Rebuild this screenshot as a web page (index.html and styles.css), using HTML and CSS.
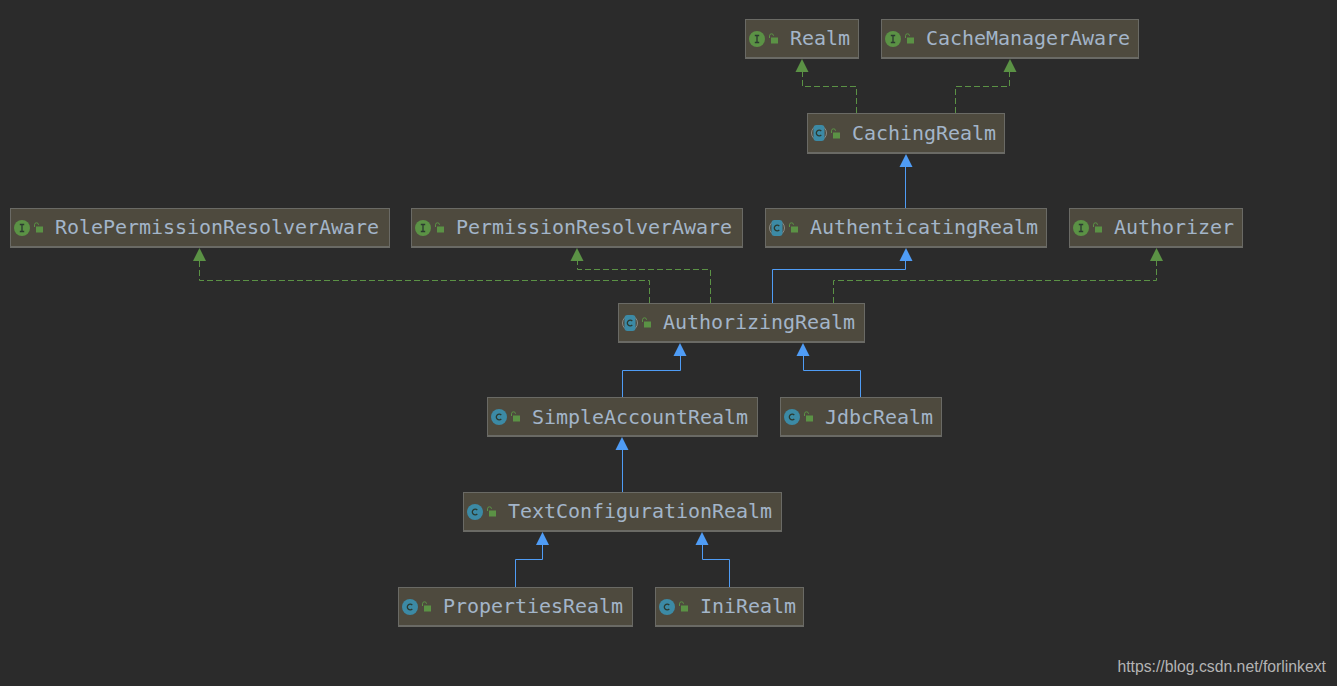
FILE: index.html
```
<!DOCTYPE html>
<html lang="en">
<head>
<meta charset="utf-8">
<title>Realm class diagram</title>
<link rel="stylesheet" href="styles.css">
</head>
<body>
<main class="canvas">
<svg class="edges" width="1337" height="686" viewBox="0 0 1337 686" aria-hidden="true">
  <g class="dash">
    <path d="M856.5 113V86.5H802.500V70"/>
    <path d="M955.5 113V86.5H1009.500V70"/>
    <path d="M649.5 303V280.5H199.500V260"/>
    <path d="M710.5 303V269.5H577.500V260"/>
    <path d="M833.5 303V280.5H1156.500V260"/>
  </g>
  <g class="solid">
    <path d="M905.5 208V165"/>
    <path d="M772.5 303V269.5H905.500V260"/>
    <path d="M622.5 397V370.5H680.500V354"/>
    <path d="M860.5 397V370.5H803.500V354"/>
    <path d="M622.5 492V449"/>
    <path d="M515.5 587V559.5H542.500V544"/>
    <path d="M729.5 587V559.5H702.500V544"/>
  </g>
  <g class="head-green">
    <path d="M802 59l6.5 13h-13z"/>
    <path d="M1010 59l6.5 13h-13z"/>
    <path d="M199.500 248l6.500 13h-13z"/>
    <path d="M577 248l6.500 13h-13z"/>
    <path d="M1156.500 248l6.500 13h-13z"/>
  </g>
  <g class="head-blue">
    <path d="M906 154l6.500 13h-13z"/>
    <path d="M906 248l6.500 13h-13z"/>
    <path d="M680 343l6.500 13h-13z"/>
    <path d="M803 343l6.500 13h-13z"/>
    <path d="M622 437l6.500 13h-13z"/>
    <path d="M542.500 532l6.500 13h-13z"/>
    <path d="M702 532l6.500 13h-13z"/>
  </g>
  <defs>
    <g id="lock">
      <path class="shackle" d="M1.500 5V2.800a2 2 0 0 1 4 0"/>
      <rect class="lockbody" x="3" y="4.500" width="7" height="6"/>
    </g>
    <g id="iface">
      <circle class="iface-disc" cx="8" cy="8" r="8"/>
      <path class="glyph" d="M5.800 4.500h4.400M5.800 11.500h4.400M8 4.500v7"/>
    </g>
    <g id="cls">
      <circle class="cls-disc" cx="8" cy="8" r="8"/>
      <path class="glyph" d="M10.300 6a2.900 2.900 0 1 0 0 4"/>
    </g>
    <g id="abs">
      <circle class="abs-ring" cx="8" cy="8" r="7.500"/>
      <rect class="cls-disc" x="2.500" y="0" width="11" height="16" rx="3"/>
      <path class="glyph" d="M10.300 6a2.900 2.900 0 1 0 0 4"/>
    </g>
  </defs>
</svg>

<div class="node n-realm"><svg class="kind"><use href="#iface"/></svg><svg class="lock"><use href="#lock"/></svg><span>Realm</span></div>
<div class="node n-cache"><svg class="kind"><use href="#iface"/></svg><svg class="lock"><use href="#lock"/></svg><span>CacheManagerAware</span></div>
<div class="node n-caching"><svg class="kind"><use href="#abs"/></svg><svg class="lock"><use href="#lock"/></svg><span>CachingRealm</span></div>
<div class="node n-role"><svg class="kind"><use href="#iface"/></svg><svg class="lock"><use href="#lock"/></svg><span>RolePermissionResolverAware</span></div>
<div class="node n-perm"><svg class="kind"><use href="#iface"/></svg><svg class="lock"><use href="#lock"/></svg><span>PermissionResolverAware</span></div>
<div class="node n-authn"><svg class="kind"><use href="#abs"/></svg><svg class="lock"><use href="#lock"/></svg><span>AuthenticatingRealm</span></div>
<div class="node n-authr"><svg class="kind"><use href="#iface"/></svg><svg class="lock"><use href="#lock"/></svg><span>Authorizer</span></div>
<div class="node n-authz"><svg class="kind"><use href="#abs"/></svg><svg class="lock"><use href="#lock"/></svg><span>AuthorizingRealm</span></div>
<div class="node n-simple"><svg class="kind"><use href="#cls"/></svg><svg class="lock"><use href="#lock"/></svg><span>SimpleAccountRealm</span></div>
<div class="node n-jdbc"><svg class="kind"><use href="#cls"/></svg><svg class="lock"><use href="#lock"/></svg><span>JdbcRealm</span></div>
<div class="node n-text"><svg class="kind"><use href="#cls"/></svg><svg class="lock"><use href="#lock"/></svg><span>TextConfigurationRealm</span></div>
<div class="node n-props"><svg class="kind"><use href="#cls"/></svg><svg class="lock"><use href="#lock"/></svg><span>PropertiesRealm</span></div>
<div class="node n-ini"><svg class="kind"><use href="#cls"/></svg><svg class="lock"><use href="#lock"/></svg><span>IniRealm</span></div>

<p class="credit">https://blog.csdn.net/forlinkext</p>
</main>
</body>
</html>
```
FILE: styles.css
```
html, body {
  margin: 0;
  padding: 0;
  background: #2b2b2b;
}
.canvas {
  position: relative;
  width: 1337px;
  height: 686px;
  overflow: hidden;
  background: #2b2b2b;
}
.edges {
  position: absolute;
  left: 0;
  top: 0;
}
.edges path {
  fill: none;
}
.dash path {
  stroke: #5b9245;
  stroke-width: 1;
  stroke-dasharray: 6 3;
}
.solid path {
  stroke: #4f9cf5;
  stroke-width: 1;
}
.head-green path {
  fill: #5b9245;
}
.head-blue path {
  fill: #4f9cf5;
}
.node {
  position: absolute;
  box-sizing: border-box;
  height: 40px;
  display: flex;
  align-items: center;
  background: #4e4a3e;
  border: 1px solid #6a6a65;
  border-bottom-width: 2px;
  padding-left: 3px;
  font-family: "DejaVu Sans Mono", "Liberation Mono", monospace;
  font-size: 20px;
  color: #a3b5c9;
  white-space: nowrap;
}
.kind {
  width: 16px;
  height: 16px;
  flex: none;
  overflow: visible;
}
.lock {
  width: 11px;
  height: 11px;
  flex: none;
  margin-left: 3px;
}
.node span {
  margin-left: 11px;
  margin-bottom: 2px;
  letter-spacing: -0.04px;
}
.n-caching span,
.n-simple span,
.n-jdbc span {
  margin-bottom: 0;
}
.shackle {
  fill: none;
  stroke: #5b9245;
  stroke-width: 1;
}
.lockbody {
  fill: #5b9245;
}
.iface-disc {
  fill: #5b9245;
}
.cls-disc {
  fill: #3c8aa5;
}
.abs-ring {
  fill: none;
  stroke: #8a8a85;
  stroke-width: 1;
}
.glyph {
  fill: none;
  stroke: #2b3a30;
  stroke-width: 1.300;
}
.n-realm { left: 745px; top: 19px; width: 114px; }
.n-cache { left: 881px; top: 19px; width: 258px; }
.n-caching { left: 807px; top: 113px; width: 198px; height: 41px; }
.n-role { left: 10px; top: 208px; width: 380px; }
.n-perm { left: 411px; top: 208px; width: 332px; }
.n-authn { left: 765px; top: 208px; width: 282px; }
.n-authr { left: 1069px; top: 208px; width: 174px; }
.n-authz { left: 618px; top: 303px; width: 247px; }
.n-simple { left: 487px; top: 397px; width: 271px; }
.n-jdbc { left: 780px; top: 397px; width: 162px; }
.n-text { left: 463px; top: 492px; width: 319px; }
.n-props { left: 398px; top: 587px; width: 235px; }
.n-ini { left: 655px; top: 587px; width: 149px; }
.credit {
  position: absolute;
  right: 11px;
  top: 658px;
  margin: 0;
  font-family: "Liberation Sans", Arial, sans-serif;
  font-size: 15.770px;
  line-height: 18px;
  color: #b4b4b4;
}
```
